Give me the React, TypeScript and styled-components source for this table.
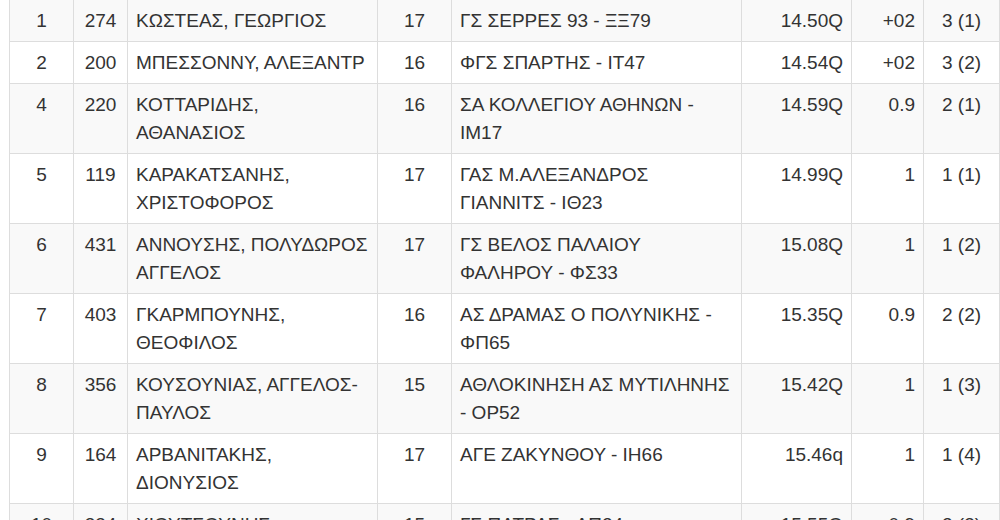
import * as React from 'react'
import styled, { createGlobalStyle } from 'styled-components'

const GlobalStyle = createGlobalStyle`
  html, body {
    margin: 0;
    padding: 0;
    background: #fff;
    overflow: hidden;
  }
  body {
    font-family: "Liberation Sans", Arial, sans-serif;
    color: #333;
  }
`

const SPage = styled.div`
  width: 1000px;
  height: 520px;
  overflow: hidden;
  padding-left: 9px;
  box-sizing: border-box;
`

const STable = styled.table`
  width: 990px;
  margin-top: -1px;
  border-collapse: collapse;
  table-layout: fixed;
  font-size: 19px;
  line-height: 28px;
`

interface IRowProps {
  striped?: boolean
}

const SRow = styled.tr<IRowProps>`
  background: ${({ striped }) => (striped ? '#f9f9f9' : '#fff')};
`

interface ICellProps {
  align?: 'left' | 'center' | 'right'
}

const SCell = styled.td<ICellProps>`
  border: 1px solid #ddd;
  padding: 7px 8px 6px;
  vertical-align: top;
  text-align: ${({ align }) => align || 'left'};
  word-wrap: break-word;
`

const columns: { width: number; align: 'left' | 'center' | 'right' }[] = [
  { width: 64, align: 'center' },
  { width: 54, align: 'center' },
  { width: 250, align: 'left' },
  { width: 74, align: 'center' },
  { width: 290, align: 'left' },
  { width: 110, align: 'right' },
  { width: 72, align: 'right' },
  { width: 76, align: 'center' }
]

const results = [
  ['1', '274', 'ΚΩΣΤΕΑΣ, ΓΕΩΡΓΙΟΣ', '17', 'ΓΣ ΣΕΡΡΕΣ 93 - ΞΞ79', '14.50Q', '+02', '3 (1)'],
  ['2', '200', 'ΜΠΕΣΣΟΝΝΥ, ΑΛΕΞΑΝΤΡ', '16', 'ΦΓΣ ΣΠΑΡΤΗΣ - ΙΤ47', '14.54Q', '+02', '3 (2)'],
  ['4', '220', 'ΚΟΤΤΑΡΙΔΗΣ, ΑΘΑΝΑΣΙΟΣ', '16', 'ΣΑ ΚΟΛΛΕΓΙΟΥ ΑΘΗΝΩΝ - ΙΜ17', '14.59Q', '0.9', '2 (1)'],
  ['5', '119', 'ΚΑΡΑΚΑΤΣΑΝΗΣ, ΧΡΙΣΤΟΦΟΡΟΣ', '17', 'ΓΑΣ Μ.ΑΛΕΞΑΝΔΡΟΣ ΓΙΑΝΝΙΤΣ - ΙΘ23', '14.99Q', '1', '1 (1)'],
  ['6', '431', 'ΑΝΝΟΥΣΗΣ, ΠΟΛΥΔΩΡΟΣ ΑΓΓΕΛΟΣ', '17', 'ΓΣ ΒΕΛΟΣ ΠΑΛΑΙΟΥ ΦΑΛΗΡΟΥ - ΦΣ33', '15.08Q', '1', '1 (2)'],
  ['7', '403', 'ΓΚΑΡΜΠΟΥΝΗΣ, ΘΕΟΦΙΛΟΣ', '16', 'ΑΣ ΔΡΑΜΑΣ Ο ΠΟΛΥΝΙΚΗΣ - ΦΠ65', '15.35Q', '0.9', '2 (2)'],
  ['8', '356', 'ΚΟΥΣΟΥΝΙΑΣ, ΑΓΓΕΛΟΣ-ΠΑΥΛΟΣ', '15', 'ΑΘΛΟΚΙΝΗΣΗ ΑΣ ΜΥΤΙΛΗΝΗΣ - ΟΡ52', '15.42Q', '1', '1 (3)'],
  ['9', '164', 'ΑΡΒΑΝΙΤΑΚΗΣ, ΔΙΟΝΥΣΙΟΣ', '17', 'ΑΓΕ ΖΑΚΥΝΘΟΥ - ΙΗ66', '15.46q', '1', '1 (4)'],
  ['10', '334', 'ΧΙΟΥΤΣΟΥΝΗΣ, ΝΙΚΟΛΑΟΣ', '15', 'ΓΣ ΠΑΤΡΑΣ - ΑΠ24', '15.55Q', '0.9', '2 (3)']
]

function App() {
  return (
    <SPage>
      <GlobalStyle />
      <STable>
        <colgroup>
          {columns.map((col, i) => (
            <col key={i} style={{ width: col.width }} />
          ))}
        </colgroup>
        <tbody>
          {results.map((row, r) => (
            <SRow key={r} striped={r % 2 === 0}>
              {row.map((value, c) => (
                <SCell key={c} align={columns[c].align}>
                  {value}
                </SCell>
              ))}
            </SRow>
          ))}
        </tbody>
      </STable>
    </SPage>
  )
}

export default App
